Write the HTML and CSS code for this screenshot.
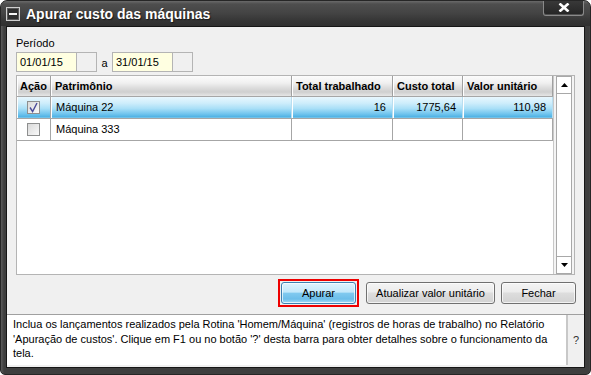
FILE: index.html
```html
<!DOCTYPE html>
<html lang="pt">
<head>
<meta charset="utf-8">
<title>Apurar custo das máquinas</title>
<link rel="stylesheet" href="styles.css">
</head>
<body>
<div class="window">
  <div class="titlebar">
    <span class="sysicon"><svg width="14" height="14" viewBox="0 0 14 14"><rect x="0.5" y="0.5" width="13" height="13" fill="#2e2e2e" stroke="#cfcfcf"/><rect x="1.5" y="1.5" width="11" height="11" fill="none" stroke="#5a5a5a"/><rect x="3" y="6" width="8" height="2" fill="#f4f4f4"/></svg></span>
    <span class="title">Apurar custo das máquinas</span>
    <span class="close"><svg width="12" height="9" viewBox="0 0 12 9"><path d="M1.5 0.5 L10.5 8.5 M10.5 0.5 L1.5 8.5" stroke="#ffffff" stroke-width="2.6" fill="none"/></svg></span>
  </div>
  <div class="frame">
    <div class="body">
      <div class="content">
        <div class="label">Período</div>
        <div class="period">
          <span class="date">01/01/15</span><span class="datebtn"></span>
          <span class="sep">a</span>
          <span class="date">31/01/15</span><span class="datebtn"></span>
        </div>
        <div class="grid">
          <div class="table">
            <div class="row head">
              <div class="cell">Ação</div>
              <div class="cell">Patrimônio</div>
              <div class="cell">Total trabalhado</div>
              <div class="cell">Custo total</div>
              <div class="cell">Valor unitário</div>
            </div>
            <div class="row sel">
              <div class="cell chk"><svg width="13" height="13" viewBox="0 0 13 13"><defs><linearGradient id="cb1" x1="0" y1="0" x2="1" y2="1"><stop offset="0" stop-color="#d8d8d8"/><stop offset="1" stop-color="#fbfbfb"/></linearGradient></defs><rect x="0.5" y="0.5" width="12" height="12" fill="url(#cb1)" stroke="#8e8f8f"/><path d="M3 6.5 L5.6 10.5 L10 2" stroke="#4a4c9a" stroke-width="1.4" fill="none"/></svg></div>
              <div class="cell">Máquina 22</div>
              <div class="cell num">16</div>
              <div class="cell num">1775,64</div>
              <div class="cell num">110,98</div>
            </div>
            <div class="row">
              <div class="cell chk"><svg width="13" height="13" viewBox="0 0 13 13"><defs><linearGradient id="cb2" x1="0" y1="0" x2="1" y2="1"><stop offset="0" stop-color="#d8d8d8"/><stop offset="1" stop-color="#fbfbfb"/></linearGradient></defs><rect x="0.5" y="0.5" width="12" height="12" fill="url(#cb2)" stroke="#8e8f8f"/></svg></div>
              <div class="cell">Máquina 333</div>
              <div class="cell"></div>
              <div class="cell"></div>
              <div class="cell"></div>
            </div>
          </div>
          <div class="scrollbar">
            <div class="sbtn"><svg width="7" height="4" viewBox="0 0 7 4"><path d="M0 4 L3.5 0 L7 4 Z" fill="#000"/></svg></div>
            <div class="strack"></div>
            <div class="sbtn"><svg width="7" height="4" viewBox="0 0 7 4"><path d="M0 0 L7 0 L3.5 4 Z" fill="#000"/></svg></div>
          </div>
        </div>
        <div class="actions">
          <span class="focus"><span class="btn primary w75">Apurar</span></span>
          <span class="btn w129">Atualizar valor unitário</span>
          <span class="btn w75">Fechar</span>
        </div>
      </div>
      <div class="status">
        <div class="msg">Inclua os lançamentos realizados pela Rotina 'Homem/Máquina' (registros de horas de trabalho) no Relatório 'Apuração de custos'. Clique em F1 ou no botão '?' desta barra para obter detalhes sobre o funcionamento da tela.</div>
        <div class="help">?</div>
      </div>
    </div>
  </div>
</div>
</body>
</html>
```
FILE: styles.css
```css
* { box-sizing: border-box; }
html, body { margin: 0; padding: 0; background: #ffffff; }
body {
  font-family: "Liberation Sans", Arial, sans-serif;
  font-size: 11px;
  color: #000;
}
.window {
  width: 591px;
  height: 375px;
  display: flex;
  flex-direction: column;
  background: linear-gradient(90deg, #5c5c5c 0, #3e3e3e 3px, #3e3e3e 588px, #5c5c5c 591px);
  border-radius: 7px 7px 5px 5px;
  border: 1px solid #262626;
  overflow: hidden;
}
.titlebar {
  height: 25px;
  flex: none;
  display: flex;
  align-items: flex-start;
  background: linear-gradient(#6a6a6a 0, #4e4e4e 3px, #444 12px, #353535 20px, #303030 25px);
}
.sysicon {
  width: 14px;
  height: 14px;
  margin: 6px 0 0 5px;
  display: flex;
}
.title {
  margin-left: 6px;
  color: #ffffff;
  font-weight: bold;
  font-size: 14px;
  line-height: 25px;
  padding-top: 1px;
  text-shadow: 1px 1px 1px #1a1a1a;
}
.close {
  margin-left: auto;
  margin-right: 6px;
  margin-top: -1px;
  width: 41px;
  height: 16px;
  display: flex;
  align-items: center;
  justify-content: center;
  background: linear-gradient(#3a3a3a, #252525);
  border: 1px solid #8a8a8a;
  border-top: none;
  border-radius: 0 0 3px 3px;
  box-shadow: inset 0 -1px 0 #505050;
}
.frame {
  flex: 1;
  display: flex;
  padding: 0 5px 6px 5px;
}
.body {
  flex: 1;
  display: flex;
  flex-direction: column;
  background: #f0f0f0;
  border: 1px solid #161616;
}
.content {
  flex: 1;
  padding: 9px 8px 0 9px;
  display: flex;
  flex-direction: column;
}
.label {
  height: 14px;
  line-height: 14px;
}
.period {
  margin-top: 2px;
  height: 20px;
  display: flex;
  align-items: stretch;
}
.date {
  width: 61px;
  background: #ffffe1;
  border: 1px solid #b4b4b4;
  padding-left: 3px;
  line-height: 18px;
}
.datebtn {
  width: 20px;
  background: #f0f0f0;
  border: 1px solid #b4b4b4;
  border-left: none;
}
.sep {
  width: 15px;
  text-align: center;
  line-height: 22px;
}
.grid {
  margin-top: 3px;
  margin-right: 1px;
  height: 200px;
  display: flex;
  border: 1px solid #b4b4b4;
  background: #ffffff;
}
.table {
  width: 536px;
}
.row {
  display: grid;
  grid-template-columns: 34px 241px 101px 70px 90px;
  height: 22px;
  border-bottom: 1px solid #a6a6a6;
}
.cell {
  border-right: 1px solid #a6a6a6;
  padding: 0 5px;
  line-height: 21px;
  white-space: nowrap;
  overflow: hidden;
}
.row.head {
  height: 21px;
  background: linear-gradient(#fcfcfc 0, #f0f0f0 35%, #dcdcdc 60%, #cfcfcf 80%, #e6e6e6 100%);
  font-weight: bold;
}
.row.head .cell {
  line-height: 20px;
  padding: 0 3px;
  border-right: 1px solid #a0a0a0;
  box-shadow: inset 1px 0 0 #ffffff;
}
.row.head .cell:nth-child(n+2) { padding-left: 4px; }
.row.sel .cell {
  background: linear-gradient(#e8f7fe 0, #cdedfb 30%, #a9dff7 55%, #72c5ee 80%, #4fb2e4 95%, #8ccfee 100%);
  border-right: 1px solid #b9def0;
  box-shadow: inset 1px 0 0 #ffffff;
}
.cell.num { text-align: right; padding-right: 6px; }
.cell.chk {
  display: flex;
  align-items: center;
  justify-content: center;
  padding: 0;
}
.row.sel .cell.chk { border-right-color: #a6a6a6; }
.scrollbar {
  flex: 1;
  display: flex;
  flex-direction: column;
  padding: 0 2px 0 2px;
  background: #f4f4f4;
  border-left: 1px solid #c8c8c8;
}
.sbtn {
  height: 18px;
  border: 1px solid #a8a8a8;
  background: #ffffff;
  display: flex;
  align-items: center;
  justify-content: center;
}
.strack {
  flex: 1;
  border-left: 1px solid #a8a8a8;
  border-right: 1px solid #a8a8a8;
  background: #ffffff;
}
.actions {
  margin-top: 4px;
  display: flex;
  align-items: center;
  justify-content: flex-end;
  gap: 6px;
}
.btn {
  height: 22px;
  display: flex;
  align-items: center;
  justify-content: center;
  border: 1px solid #707070;
  border-radius: 3px;
  background: linear-gradient(#f4f4f4 0, #ececec 45%, #dddddd 50%, #d2d2d2 100%);
  box-shadow: inset 0 0 0 1px rgba(255,255,255,0.7);
}
.btn.primary {
  border-color: #3c7fb1;
  background: linear-gradient(#dff3fd 0, #c2e8fb 45%, #7fc9ef 52%, #6cbeea 80%, #a6daf5 100%);
}
.w75 { width: 75px; }
.w129 { width: 129px; margin-left: 1px; }
.focus {
  display: flex;
  border: 2px solid #ee0000;
  padding: 1px;
  background: #f0f0f0;
}
.status {
  margin-top: 7px;
  height: 53px;
  display: flex;
  border-top: 1px solid #a0a0a0;
  padding-bottom: 2px;
}
.msg {
  flex: 1;
  background: #ffffff;
  padding: 2px 10px 0 6px;
  line-height: 14.5px;
}
.help {
  width: 18px;
  border-left: 2px solid #c8c8c8;
  display: flex;
  align-items: center;
  justify-content: center;
  color: #333;
}
```
